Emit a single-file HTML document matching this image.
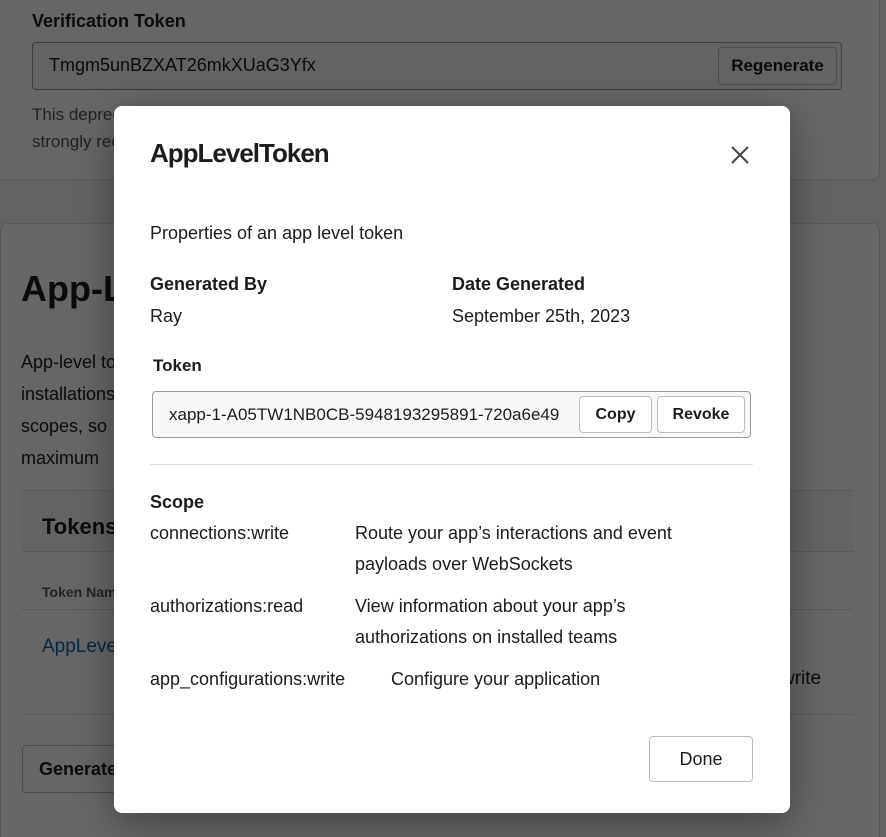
<!DOCTYPE html>
<html style="overflow:hidden"><head><style>
*{box-sizing:border-box;margin:0;padding:0}
body{width:886px;height:837px;overflow:hidden;background:#f4f4f4;font-family:"Liberation Sans",sans-serif;color:#1d1c1d;position:relative}
.card{position:absolute;background:#fff;border:1px solid #ddd;border-radius:6px}
.ov{position:fixed;left:0;top:0;width:886px;height:837px;background:rgba(0,0,0,0.6)}
.modal{position:absolute;left:114px;top:106px;width:676px;height:707px;background:#fff;border-radius:8px;box-shadow:0 10px 40px rgba(0,0,0,.35)}
.a{position:absolute;white-space:nowrap}
.btn{position:absolute;background:#fff;border:1px solid #bbb;border-radius:4px;font-weight:bold;text-align:center}
.s{font-size:18px;line-height:31px}
</style></head><body>
<div class="card" style="left:-10px;top:-10px;width:890px;height:190px">
 <div class="a" style="left:41px;top:20px;font-size:18px;font-weight:bold">Verification Token</div>
 <div class="a" style="left:41px;top:51px;width:810px;height:48px;border:1px solid #999;border-radius:4px;background:#f8f8f8"></div>
 <div class="a" style="left:58px;top:64px;font-size:18px">Tmgm5unBZXAT26mkXUaG3Yfx</div>
 <div class="btn" style="left:727px;top:56px;width:119px;height:38px;line-height:36px;font-size:17px;background:#f8f8f8">Regenerate</div>
 <div class="a" style="left:41px;top:110px;font-size:17px;color:#555;line-height:27px">This deprecated Verification Token can still be used to verify that requests come from Slack, but we<br>strongly recommend using</div>
</div>
<div class="card" style="left:0;top:223px;width:880px;height:620px">
 <div class="a" style="left:20px;top:44px;font-size:36px;font-weight:bold">App-Level Tokens</div>
 <div class="a" style="left:20px;top:122px;font-size:18px;line-height:32px">App-level tokens allow your app to use platform features that apply to multiple (or all)<br>installations<br>scopes, so<br>maximum</div>
 <div class="a" style="left:20px;top:266px;width:832px;height:62px;background:#f8f8f8;border-top:1px solid #ddd;border-bottom:1px solid #ddd"></div>
 <div class="a" style="left:41px;top:290px;font-size:22px;font-weight:bold">Tokens</div>
 <div class="a" style="left:41px;top:360px;font-size:14px;font-weight:bold;color:#555">Token Name</div>
 <div class="a" style="left:20px;top:385px;width:832px;border-top:1px solid #ddd"></div>
 <div class="a" style="left:41px;top:412px;font-size:19px;color:#1264a3">AppLevelToken</div>
 <div class="a" style="left:780px;top:444px;font-size:19px">write</div>
 <div class="a" style="left:20px;top:490px;width:832px;border-top:1px solid #ddd"></div>
 <div class="btn" style="left:21px;top:521px;width:200px;height:48px;line-height:46px;font-size:18px;text-align:left;padding-left:16px">Generate Token</div>
</div>
<div class="ov"></div>
<div class="modal">
 <div class="a" style="left:36px;top:32px;font-size:26px;font-weight:bold;letter-spacing:-1px">AppLevelToken</div>
 <svg class="a" style="left:617px;top:40px" width="18" height="18" viewBox="0 0 18 18"><path d="M1 1L17 17M17 1L1 17" stroke="#444" stroke-width="2"/></svg>
 <div class="a" style="left:36px;top:117px;font-size:18px">Properties of an app level token</div>
 <div class="a" style="left:36px;top:168px;font-size:18px;font-weight:bold">Generated By</div>
 <div class="a" style="left:36px;top:200px;font-size:18px">Ray</div>
 <div class="a" style="left:338px;top:168px;font-size:18px;font-weight:bold">Date Generated</div>
 <div class="a" style="left:338px;top:200px;font-size:18px">September 25th, 2023</div>
 <div class="a" style="left:39px;top:250px;font-size:17px;font-weight:bold">Token</div>
 <div class="a" style="left:38px;top:285px;width:599px;height:47px;border:1px solid #999;border-radius:4px;background:#f8f8f8;overflow:hidden"><div class="a" style="left:16px;top:13px;font-size:17px">xapp-1-A05TW1NB0CB-5948193295891-720a6e49</div></div>
 <div class="btn" style="left:465px;top:290px;width:73px;height:37px;line-height:35px;font-size:16px">Copy</div>
 <div class="btn" style="left:543px;top:290px;width:88px;height:37px;line-height:35px;font-size:16px">Revoke</div>
 <div class="a" style="left:36px;top:358px;width:603px;border-top:1px solid #ddd"></div>
 <div class="a" style="left:36px;top:381px;font-size:18px;font-weight:bold;line-height:31px">Scope</div>
 <div class="a s" style="left:36px;top:412px">connections:write</div>
 <div class="a s" style="left:241px;top:412px">Route your app’s interactions and event<br>payloads over WebSockets</div>
 <div class="a s" style="left:36px;top:485px">authorizations:read</div>
 <div class="a s" style="left:241px;top:485px">View information about your app’s<br>authorizations on installed teams</div>
 <div class="a s" style="left:36px;top:558px">app_configurations:write</div>
 <div class="a s" style="left:277px;top:558px">Configure your application</div>
 <div class="btn" style="left:535px;top:630px;width:104px;height:46px;line-height:44px;font-size:18px;font-weight:normal;color:#1d1c1d">Done</div>
</div>
</body></html>
